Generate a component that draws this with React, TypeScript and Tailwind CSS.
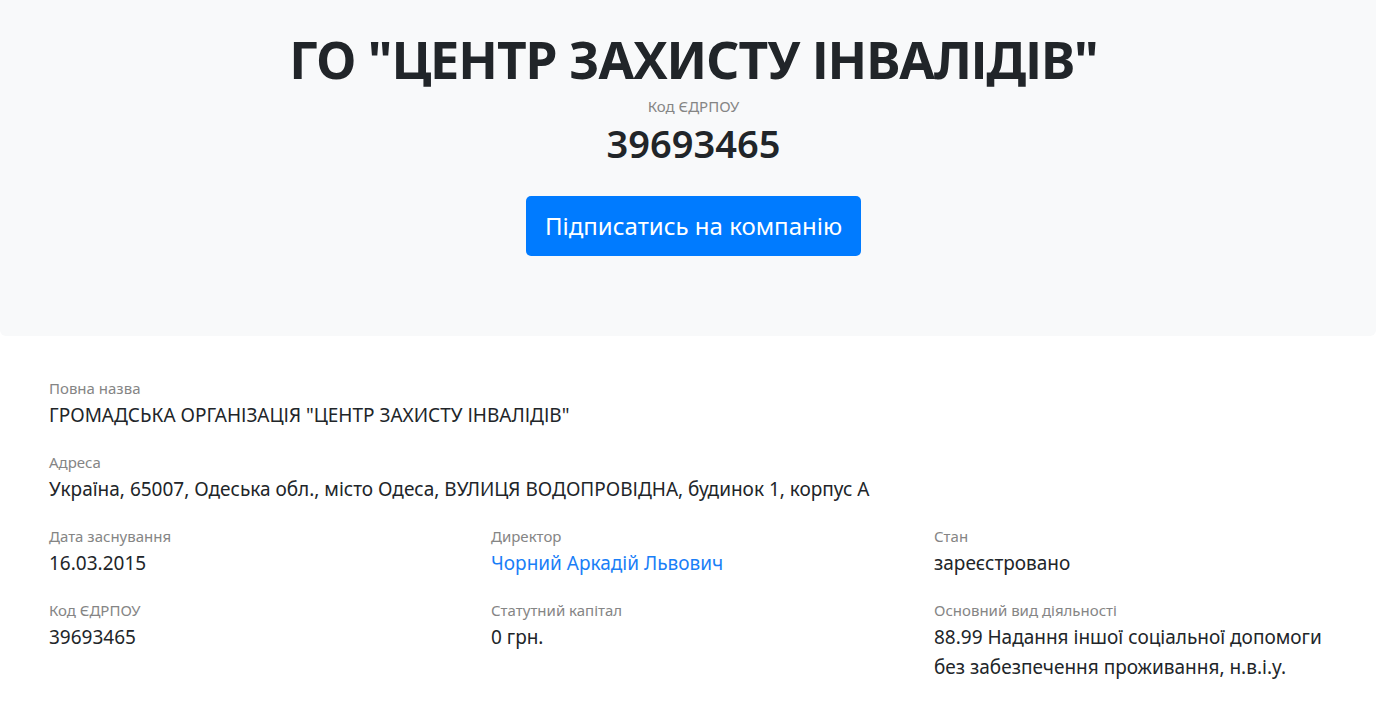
const rows: { label: string; value: string; link?: boolean }[][] = [
  [
    { label: "Дата заснування", value: "16.03.2015" },
    { label: "Директор", value: "Чорний Аркадій Львович", link: true },
    { label: "Стан", value: "зареєстровано" },
  ],
  [
    { label: "Код ЄДРПОУ", value: "39693465" },
    { label: "Статутний капітал", value: "0 грн." },
    {
      label: "Основний вид діяльності",
      value: "88.99 Надання іншої соціальної допомоги без забезпечення проживання, н.в.і.у.",
    },
  ],
];

function Field({ label, value, link }: { label: string; value: string; link?: boolean }) {
  return (
    <div className="mb-[20px]">
      <div className="text-[15px] leading-[24px] text-[#858585]">{label}</div>
      <div className={`text-[19px] leading-[30px] ${link ? "text-[#1a7ef7]" : "text-[#212529]"}`}>{value}</div>
    </div>
  );
}

export default function App() {
  return (
    <div className="min-h-[709px] bg-white font-['Noto_Sans',sans-serif] text-[#212529]">
      <div className="flex h-[336px] flex-col items-center rounded-b-md bg-[#f8f9fa] pl-[11px] pt-[24px]">
        <h1 className="text-[51.5px] font-bold leading-[70px] tracking-[-1px]">ГО "ЦЕНТР ЗАХИСТУ ІНВАЛІДІВ"</h1>
        <div className="mt-[2px] text-[15px] leading-[20px] text-[#858585]">Код ЄДРПОУ</div>
        <div className="mt-[2px] text-[38px] font-semibold leading-[50px]">39693465</div>
        <button className="mt-[28px] h-[60px] rounded-[5px] bg-[#007bff] px-[19px] text-[24px] text-white">
          Підписатись на компанію
        </button>
      </div>
      <div className="px-[49px] pt-[40px]">
        <Field label="Повна назва" value={'ГРОМАДСЬКА ОРГАНІЗАЦІЯ "ЦЕНТР ЗАХИСТУ ІНВАЛІДІВ"'} />
        <Field label="Адреса" value="Україна, 65007, Одеська обл., місто Одеса, ВУЛИЦЯ ВОДОПРОВІДНА, будинок 1, корпус А" />
        {rows.map((row, i) => (
          <div key={i} className="grid grid-cols-[442px_443px_1fr]">
            {row.map((f) => (
              <Field key={f.label} {...f} />
            ))}
          </div>
        ))}
      </div>
    </div>
  );
}
